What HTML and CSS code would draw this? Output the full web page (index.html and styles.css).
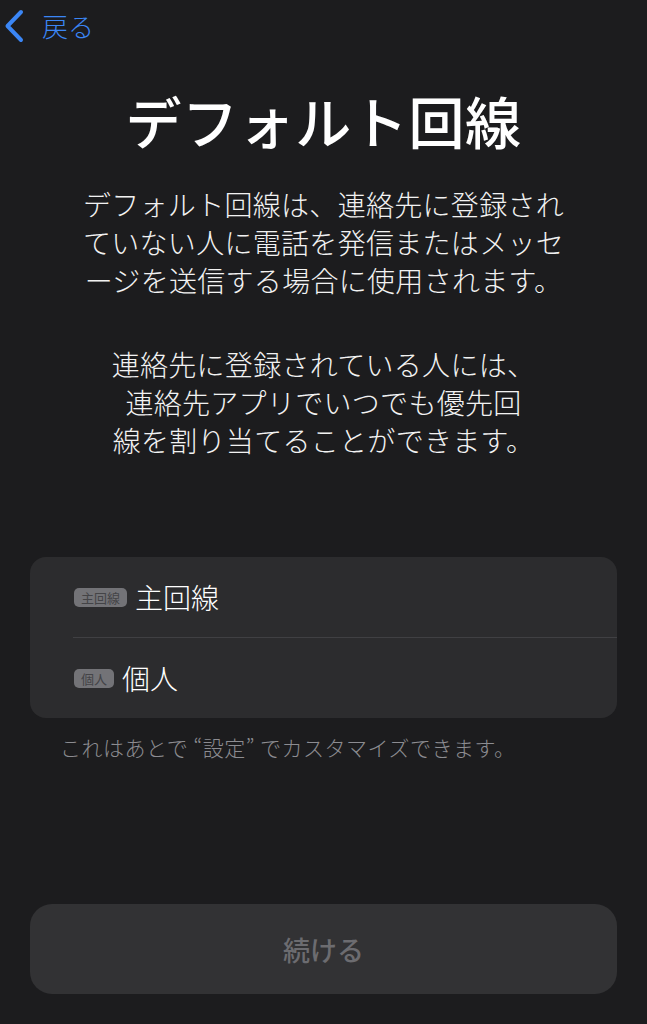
FILE: index.html
```html
<!DOCTYPE html>
<html lang="ja">
<head>
<meta charset="utf-8">
<title>デフォルト回線</title>
<link rel="stylesheet" href="styles.css">
</head>
<body>
<div class="screen">
  <nav class="nav">
    <a class="back" href="#">
      <svg class="chevron" width="20" height="34" viewBox="0 0 20 34" aria-hidden="true">
        <polyline points="17,3 3.5,17 17,31" fill="none" stroke="currentColor" stroke-width="4" stroke-linecap="round" stroke-linejoin="round"/>
      </svg>
      <span class="back-label">戻る</span>
    </a>
  </nav>

  <h1 class="title">デフォルト回線</h1>

  <p class="desc">デフォルト回線は、連絡先に登録され<br>ていない人に電話を発信またはメッセ<br>ージを送信する場合に使用されます。</p>
  <p class="desc desc-second">連絡先に登録されている人には、<br>連絡先アプリでいつでも優先回<br>線を割り当てることができます。</p>

  <div class="card">
    <div class="row">
      <span class="badge">主回線</span>
      <span class="row-label">主回線</span>
    </div>
    <div class="divider"></div>
    <div class="row">
      <span class="badge">個人</span>
      <span class="row-label">個人</span>
    </div>
  </div>
  <p class="note">これはあとで “設定” でカスタマイズできます。</p>

  <button class="continue" type="button">続ける</button>
</div>
</body>
</html>
```

FILE: styles.css
```css
html, body {
  margin: 0;
  padding: 0;
  background: #1c1c1e;
}

body {
  font-family: "Noto Sans CJK JP", "Noto Sans", sans-serif;
  color: #ffffff;
}

.screen {
  display: flex;
  flex-direction: column;
  min-height: 1024px;
  box-sizing: border-box;
}

.nav {
  height: 52px;
  display: flex;
  align-items: center;
  padding-left: 4px;
}

.back {
  display: flex;
  align-items: center;
  gap: 18px;
  color: #3b86f5;
  text-decoration: none;
}

.chevron {
  display: block;
}

.back-label {
  font-size: 26px;
  line-height: 34px;
  font-weight: 300;
}

.title {
  margin: 34px 0 0;
  text-align: center;
  font-size: 56px;
  line-height: 67px;
  font-weight: 500;
  letter-spacing: 0.6px;
}

.desc {
  margin: 32px 0 0;
  text-align: center;
  font-size: 28px;
  line-height: 38px;
  letter-spacing: 0.3px;
  font-weight: 300;
  color: #f2f2f2;
}

.desc-second {
  margin-top: 46px;
}

.card {
  margin: 98px 30px 0;
  background: #2c2c2e;
  border-radius: 16px;
  overflow: hidden;
}

.row {
  height: 80px;
  display: flex;
  align-items: center;
  gap: 8px;
  padding-left: 44px;
}

.divider {
  height: 1px;
  margin-left: 43px;
  background: #404043;
}

.badge {
  display: inline-flex;
  align-items: center;
  height: 19px;
  padding: 0 7px;
  border-radius: 5px;
  background: #737377;
  color: #444447;
  font-size: 13px;
  line-height: 19px;
}

.row-label {
  font-size: 28px;
  line-height: 36px;
  font-weight: 300;
  color: #ffffff;
}

.note {
  margin: 16px 0 0;
  padding-left: 60px;
  font-size: 21px;
  line-height: 26px;
  letter-spacing: 0.5px;
  font-weight: 300;
  color: #8c8c91;
}

.continue {
  margin: auto 30px 30px;
  height: 90px;
  border: none;
  border-radius: 22px;
  background: #323234;
  color: #6c6c70;
  font-family: inherit;
  font-size: 27px;
  font-weight: 500;
}
```
